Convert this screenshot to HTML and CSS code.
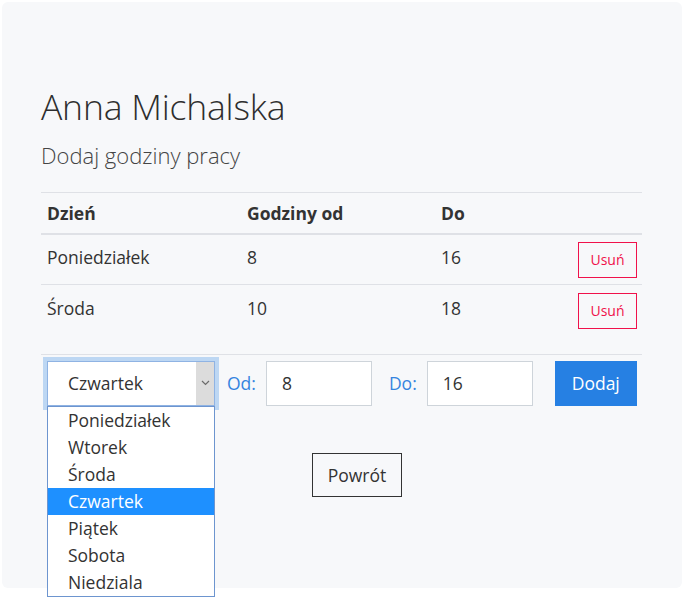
FILE: index.html
```html
<!DOCTYPE html>
<html lang="pl">
<head>
<meta charset="utf-8">
<title>Anna Michalska</title>
<link rel="stylesheet" href="styles.css">
</head>
<body>
<div class="card">
  <h1 class="name">Anna Michalska</h1>
  <h2 class="sub">Dodaj godziny pracy</h2>
  <table class="hours">
    <thead>
      <tr><th class="c1">Dzień</th><th class="c2">Godziny od</th><th class="c3">Do</th><th class="c4"></th></tr>
    </thead>
    <tbody>
      <tr><td>Poniedziałek</td><td>8</td><td>16</td><td class="act"><button class="btn-del">Usuń</button></td></tr>
      <tr><td>Środa</td><td>10</td><td>18</td><td class="act"><button class="btn-del">Usuń</button></td></tr>
    </tbody>
  </table>
  <div class="sep"></div>
  <div class="form-row">
    <div class="select-wrap">
      <div class="select">
        <span class="select-value">Czwartek</span>
        <span class="select-arrow"><svg width="9" height="6" viewBox="0 0 9 6"><path d="M1 1l3.5 3.5L8 1" fill="none" stroke="#6b6b6b" stroke-width="1.2"/></svg></span>
      </div>
      <ul class="dropdown">
        <li>Poniedziałek</li>
        <li>Wtorek</li>
        <li>Środa</li>
        <li class="sel">Czwartek</li>
        <li>Piątek</li>
        <li>Sobota</li>
        <li>Niedziala</li>
      </ul>
    </div>
    <label class="lbl lbl-od">Od:</label>
    <div class="input">8</div>
    <label class="lbl lbl-do">Do:</label>
    <div class="input">16</div>
    <button class="btn-add">Dodaj</button>
  </div>
  <div class="back-row">
    <button class="btn-back">Powrót</button>
  </div>
</div>
</body>
</html>
```

FILE: styles.css
```css
* { box-sizing: border-box; }
html, body { margin: 0; padding: 0; background: #fff; }
body {
  font-family: "Open Sans", "Noto Sans", sans-serif;
  color: #333;
  min-height: 602px;
}
.card {
  margin: 2px;
  width: 680px;
  height: 586px;
  background: #f7f8fa;
  border-radius: 6px;
  padding: 80px 40px 0 39px;
}
.name {
  margin: 0;
  font-weight: 300;
  font-size: 35.5px;
  line-height: 48px;
  color: #2e2e2e;
  letter-spacing: -0.2px;
}
.sub {
  margin: 10px 0 0 0;
  font-weight: 300;
  font-size: 22px;
  line-height: 30px;
  color: #444;
}
.hours {
  margin-top: 22px;
  width: 601px;
  border-collapse: collapse;
  font-size: 17.5px;
}
.hours th {
  text-align: left;
  font-weight: 700;
  height: 41px;
  padding: 0 0 0 6px;
  border-top: 1px solid #dfe1e6;
  border-bottom: 2px solid #dfe1e6;
  color: #333;
}
.hours .c1 { width: 200px; }
.hours .c2 { width: 194px; }
.hours .c3 { width: 140px; }
.hours td {
  padding: 0 0 5px 6px;
  height: 51px;
  border-top: 1px solid #dfe1e6;
  vertical-align: middle;
}
.hours tbody tr:first-child td { border-top: none; height: 51px; }
.hours td.act { text-align: right; padding: 0 5px 0 0; }
.btn-del {
  font-family: inherit;
  width: 59px;
  height: 36px;
  background: transparent;
  border: 1px solid #f0114b;
  color: #f0114b;
  font-size: 14px;
  padding: 0;
  margin-top: 1px;
}
.sep {
  margin-top: 18px;
  width: 601px;
  border-top: 1px solid #dfe1e6;
}
.form-row {
  display: flex;
  align-items: center;
  margin-top: 6px;
  padding-left: 6px;
  height: 45px;
}
.select-wrap {
  position: relative;
  width: 168px;
  height: 45px;
}
.select {
  display: flex;
  height: 45px;
  background: #fff;
  border: 1px solid #8fb3e3;
  outline: 4px solid #bdd7f3;
  font-size: 17.5px;
}
.select-value {
  flex: 1;
  display: flex;
  align-items: center;
  padding-left: 20px;
}
.select-arrow {
  width: 18px;
  background: #dcdcdc;
  display: flex;
  align-items: center;
  justify-content: center;
}
.dropdown {
  position: absolute;
  top: 45px;
  left: 0;
  width: 168px;
  margin: 0;
  padding: 0;
  list-style: none;
  background: #fff;
  border: 1px solid #6d95cf;
  font-size: 17.5px;
  z-index: 5;
}
.dropdown li {
  height: 27px;
  line-height: 27px;
  padding-left: 20px;
  color: #333;
}
.dropdown li.sel { background: #1e90ff; color: #fff; }
.lbl {
  color: #3584df;
  font-size: 17.5px;
}
.lbl-od { margin-left: 12px; }
.lbl-do { margin-left: 17px; }
.input {
  margin-left: 10px;
  width: 106px;
  height: 45px;
  background: #fff;
  border: 1px solid #ced4da;
  display: flex;
  align-items: center;
  padding-left: 15px;
  font-size: 17.5px;
}
.btn-add {
  margin-left: 22px;
  width: 82px;
  height: 45px;
  border: none;
  background: #2680e3;
  color: #fff;
  font-family: inherit;
  font-size: 17.5px;
  padding: 0;
}
.back-row {
  margin-top: 47px;
  padding-left: 271px;
}
.btn-back {
  width: 90px;
  height: 44px;
  background: transparent;
  border: 1px solid #333;
  color: #333;
  font-family: inherit;
  font-size: 17.5px;
  padding: 0;
}
```
